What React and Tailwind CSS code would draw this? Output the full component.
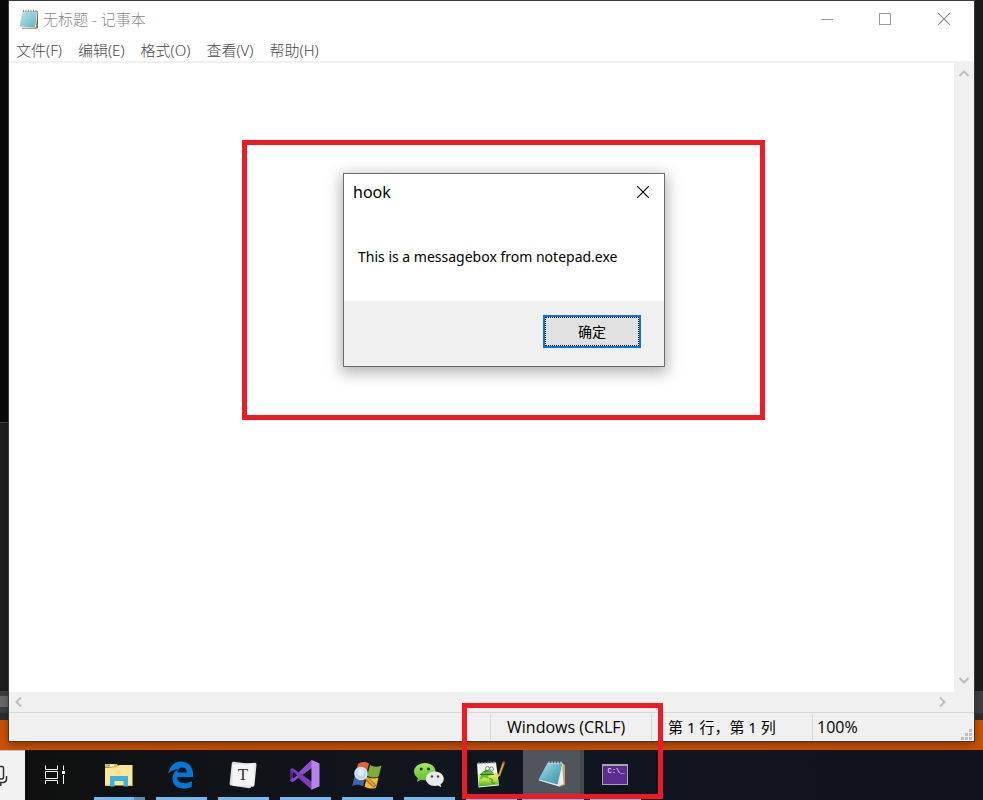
import React from "react";

const menus = ["文件(F)", "编辑(E)", "格式(O)", "查看(V)", "帮助(H)"];

function NotepadSmallIcon() {
  return (
    <svg width="20" height="21" viewBox="0 0 20 21" aria-hidden="true">
      <defs>
        <linearGradient id="padSmall" x1="0" y1="0" x2="1" y2="1">
          <stop offset="0" stopColor="#c9eaf0" />
          <stop offset="0.5" stopColor="#8fcfdc" />
          <stop offset="1" stopColor="#5eabc0" />
        </linearGradient>
      </defs>
      <path d="M4 2h15v17l-3 1z" fill="#7c6a4b" />
      <path d="M3 2h15.500l-1.500 17H2z" fill="#f4f1e6" />
      <path d="M3.500 2h14.500l-2 16.500L0.500 17.500z" fill="url(#padSmall)" />
      <path d="M4 5h13M3.700 8h13M3 11h13M2.500 14h13" stroke="#8cc6d4" strokeWidth="0.600" />
      <path d="M4.500 0.800v2.200M7 0.800v2.200M9.500 0.800v2.200M12 0.800v2.200M14.500 0.800v2.200M17 0.800v2.200" stroke="#8a8a8a" />
      <path d="M3 19.300h12l3-1" stroke="#a38f60" fill="none" />
    </svg>
  );
}

function Cross({ color }) {
  return (
    <svg width="12" height="12" viewBox="0 0 12 12" aria-hidden="true">
      <path d="M0 0l12 12M12 0L0 12" stroke={color} strokeWidth="1.100" />
    </svg>
  );
}

function Chevron({ d }) {
  return (
    <svg width="10" height="10" viewBox="0 0 10 10" aria-hidden="true">
      <path d={d} fill="none" stroke="#bdbdbd" strokeWidth="2" />
    </svg>
  );
}

function TitleBar() {
  return (
    <div className="flex h-9 items-center justify-between pl-2.5">
      <div className="flex items-center gap-1 text-[15px] font-light text-[#888888]">
        <NotepadSmallIcon />
        <h1>无标题 - 记事本</h1>
      </div>
      <div className="flex h-full">
        <button aria-label="最小化" className="flex w-[58px] items-center justify-center">
          <span className="h-px w-3 bg-[#999999]" />
        </button>
        <button aria-label="最大化" className="flex w-[58px] items-center justify-center">
          <span className="size-3 border border-[#999999]" />
        </button>
        <button aria-label="关闭" className="flex w-[60px] items-center justify-center">
          <Cross color="#888888" />
        </button>
      </div>
    </div>
  );
}

function StatusBar() {
  return (
    <div className="flex h-[29px] items-stretch border-t border-[#d7d7d7] bg-[#f0f0f0] text-[15px] text-black">
      <div className="flex-1" />
      <div className="my-px flex w-[161px] items-center border-l border-[#d7d7d7] pl-4 font-['Open_Sans',sans-serif] text-[16px]">Windows (CRLF)</div>
      <div className="my-px flex w-[161px] items-center border-l border-[#d7d7d7] pl-4">第 1 行，第 1 列</div>
      <div className="my-px flex w-[162px] items-center justify-between border-l border-[#d7d7d7] pl-1">
        <span className="font-['Open_Sans',sans-serif] text-[16px]">100%</span>
        <svg className="mr-0.5 self-end" width="11" height="11" viewBox="0 0 11 11" aria-hidden="true">
          <path d="M8 0h3v3H8zM4 4h3v3H4zM8 4h3v3H8zM0 8h3v3H0zM4 8h3v3H4zM8 8h3v3H8z" fill="#bfbfbf" />
        </svg>
      </div>
    </div>
  );
}

function NotepadWindow() {
  return (
    <section aria-label="记事本" className="relative mx-[9px] mt-px mb-[9px] flex flex-1 flex-col bg-white shadow-[0_0_0_1px_#3c3a36,0_3px_8px_rgba(0,0,0,0.4)]">
      <TitleBar />
      <nav className="flex h-6 items-center gap-4 pt-[3px] pl-[7px] text-[15px] font-light text-[#484848]">
        {menus.map((m) => (
          <button key={m}>{m}</button>
        ))}
      </nav>
      <div className="flex flex-1 border-t-2 border-[#f0f0f0]">
        <textarea aria-label="文本编辑器" className="flex-1 resize-none bg-white p-1 text-[15px] outline-none" />
        <div className="flex w-5 flex-col items-center justify-between bg-[#f0f0f0] pt-1.5 pb-[7px]">
          <button aria-label="向上滚动"><Chevron d="M0.500 7L5 2.500 9.500 7" /></button>
          <button aria-label="向下滚动"><Chevron d="M0.500 3L5 7.500 9.500 3" /></button>
        </div>
      </div>
      <div className="flex h-5 items-center justify-between bg-[#f0f0f0] pr-[27px] pl-[5px]">
        <button aria-label="向左滚动"><Chevron d="M7 0.500L2.500 5 7 9.500" /></button>
        <button aria-label="向右滚动"><Chevron d="M3 0.500L7.500 5 3 9.500" /></button>
      </div>
      <StatusBar />
    </section>
  );
}

function Backdrop() {
  return (
    <div className="absolute inset-0 flex flex-col bg-[#333333]">
      <div className="flex flex-1 justify-between">
        <div className="flex w-[9px] flex-col">
          <div className="h-[422px] bg-[#0a0a0a]" />
          <div className="h-px bg-[#3f3f46]" />
          <div className="flex-1 bg-[#1e1e1e]" />
          <div className="h-[5px] bg-[#3e3e42]" />
          <div className="h-[11px] bg-[#686868]" />
          <div className="h-[6px] bg-[#3e3e42]" />
          <div className="h-[7px] bg-[#2d2d30]" />
        </div>
        <div className="flex w-[9px] flex-col">
          <div className="flex-1 bg-[#1b1b1b]" />
          <div className="h-[22px] bg-[#3e3e42]" />
          <div className="h-[7px] bg-[#2d2d30]" />
        </div>
      </div>
      <div className="h-[30px] bg-[#ca5100]" />
    </div>
  );
}

function MessageBox() {
  return (
    <div role="dialog" aria-labelledby="box-title" className="absolute top-[173px] left-[343px] flex h-[194px] w-[322px] flex-col border border-[#6b6b6b] bg-white text-black shadow-[0_4px_14px_2px_rgba(0,0,0,0.3)]">
      <div className="flex h-9 items-center justify-between pr-[15px] pl-[9px]">
        <h2 id="box-title" className="text-[16px]">hook</h2>
        <button aria-label="关闭"><Cross color="#000000" /></button>
      </div>
      <p className="flex flex-1 items-center pt-0.5 pl-3.5 text-[14px]">This is a messagebox from notepad.exe</p>
      <div className="flex h-[65px] items-center justify-end bg-[#f0f0f0] pr-[23px] pb-1">
        <button className="h-[33px] w-[98px] border-2 border-[#0078d7] bg-[#e1e1e1] text-[14px]">
          <span className="flex h-full items-center justify-center border border-dotted border-black">确定</span>
        </button>
      </div>
    </div>
  );
}

function TaskViewIcon() {
  return (
    <svg width="20" height="20" viewBox="0 0 20 20" fill="none" stroke="#f2f2f2" aria-hidden="true">
      <path d="M0.500 0.500v4M12.500 0.500v4M0.500 4.500h12M0.500 19v-3.500h12V19M18.500 0.500V5M18.500 10v9" />
      <path d="M0.500 6.500h12v7H0.500z" />
      <path d="M17 6h3v3h-3z" fill="#fff" stroke="none" />
    </svg>
  );
}

function ExplorerIcon() {
  return (
    <svg width="28" height="24" viewBox="0 0 28 24" aria-hidden="true">
      <path d="M0 1h12l2 3H0z" fill="#f8b51c" />
      <path d="M3 1.500h6v2H3z" fill="#fff" />
      <path d="M3 1.500h2v2H3z" fill="#39b5e8" />
      <path d="M0 4.500l12-.5 2-2h13.500v20.500H0z" fill="#ffe596" />
      <path d="M5 23.500V13h18v10.500h-4.500V18h-9v5.500z" fill="#39b2e4" />
      <path d="M0 22.500h5M23 22.500h4.500" stroke="#f3c04a" />
    </svg>
  );
}

function EdgeIcon() {
  return (
    <svg width="26" height="28" viewBox="0 0 26 28" aria-hidden="true">
      <path fill="#0078d7" d="M0.500 12.400C1.600 5.200 6.600 0.600 13 0.600c7.500 0 12 5.400 12 12.200v3.300H9.100c.2 4 3.400 6.100 7.500 6.100 2.800 0 5.300-.8 7.300-2.100v5.300c-2.200 1.400-5.200 2.100-8.200 2.100-7 0-11.200-4-11.200-9.800 0-4.700 2.900-8.200 6.500-9.700C6.800 8.100 3 9.700.5 12.400zM9.300 11.400h9.500c0-3-1.700-4.900-4.500-4.900-2.700 0-4.600 2.100-5 4.900z" />
    </svg>
  );
}

function TyporaIcon() {
  return (
    <div className="relative flex h-7 w-7 items-center justify-center">
      <svg className="absolute inset-0" width="28" height="28" viewBox="0 0 28 28" aria-hidden="true">
        <path d="M5 0.800q-2-.3-2.200 1.500L0.600 22.500q-.2 1.800 1.500 2l18 2.700q1.600.2 1.900-1.500L25.500 5q.2-1.500-1.500-1.700z" fill="#dedede" />
        <path d="M4 3.500L25.500 1.800q2-.1 2 1.700L25.500 24q-.2 2-1.800 1.800L4 25z" fill="#e6e6e6" />
        <path d="M3.500 3.500h21.500v21H3.500z" fill="#f5f5f5" />
      </svg>
      <span className="relative font-['Liberation_Serif',serif] text-[17px] leading-none text-[#333333]">T</span>
    </div>
  );
}

function VisualStudioIcon() {
  return (
    <svg width="30" height="30" viewBox="0 0 30 30" aria-hidden="true">
      <path d="M0 9.500l2.500-1.200L6 10.500v9.500l-3.500 2L0 20.500z" fill="#52218a" />
      <path d="M2.500 8.300L22 26.500l-.2 3.200L2.500 13z" fill="#6f35ae" />
      <path d="M0 20.500L21.500 0l8 3.500-8 5L2.500 22z" fill="#8b50cc" />
      <path d="M0 9.500l2.500-1.200L22 21v8.500z" fill="#7a3eb9" />
      <path d="M3 11.500l4 3.700-4 3.800z" fill="#11151d" />
      <path d="M21.500 8.500v13L13 15z" fill="#11151d" />
      <path d="M21.500 0l8 3.500v22.800l-8 3.500z" fill="#b681f1" />
    </svg>
  );
}

function DebuggerIcon() {
  return (
    <svg width="30" height="28" viewBox="0 0 30 28" aria-hidden="true">
      <path d="M6 3c4-2.500 7-2.500 11-.5l-2.800 11.300C10.500 11.500 7 11.500 3 13.500z" fill="#e0622c" />
      <path d="M18 4c3.500 2 7 2.300 11.500.5l-2.800 11c-4 1.700-7.500 1.300-11.500-.8z" fill="#7fae35" />
      <path d="M2.800 14.500c4-2 7.500-1.700 11 .3l-2.600 10.500c-3.500-2-7-2.200-11-.3z" fill="#3f65ad" />
      <path d="M15 15.800c3.500 1.800 7 2 11.500.6L24 26.700c-4 1.500-7.500 1-11.500-.9z" fill="#f2c029" />
      <path d="M14.500 17.500l7.500 7" stroke="#b26a2d" strokeWidth="4" strokeLinecap="round" />
      <path d="M14.500 17l7 7" stroke="#e8a052" strokeWidth="2" strokeLinecap="round" />
      <circle cx="9" cy="12.500" r="6" fill="#b6d6f2" stroke="#dfe6ee" strokeWidth="1.600" />
      <circle cx="9" cy="11.500" r="3.500" fill="#ddeefb" />
    </svg>
  );
}

function WeChatIcon() {
  return (
    <svg width="30" height="26" viewBox="0 0 30 26" aria-hidden="true">
      <defs>
        <linearGradient id="chatGreen" x1="0" y1="0" x2="0" y2="1">
          <stop offset="0" stopColor="#a5e75c" />
          <stop offset="1" stopColor="#5fbd2c" />
        </linearGradient>
      </defs>
      <path d="M11 1c6 0 10.500 3.700 10.500 8.500S17 18.300 11 18.300c-1.500 0-2.700-.2-4-.6L3 20l.8-4C1.500 14.500 0 12.200 0 9.500 0 4.700 5 1 11 1z" fill="url(#chatGreen)" />
      <circle cx="7.200" cy="7" r="1.500" fill="#173b0e" />
      <circle cx="14.500" cy="7" r="1.500" fill="#173b0e" />
      <path d="M20.800 9.500c5 0 9 3.200 9 7.300 0 2.300-1.300 4.200-3.200 5.500l.6 3-3.200-1.700c-1 .3-2 .4-3.200.4-5 0-9-3.200-9-7.200s4-7.300 9-7.300z" fill="#e9ebeb" />
      <circle cx="18" cy="14.500" r="1.200" fill="#454949" />
      <circle cx="24" cy="14.500" r="1.200" fill="#454949" />
    </svg>
  );
}

function NotepadPlusIcon() {
  return (
    <svg width="30" height="29" viewBox="0 0 30 29" aria-hidden="true">
      <defs>
        <linearGradient id="meadow" x1="0" y1="0" x2="0" y2="1">
          <stop offset="0" stopColor="#f4f06a" />
          <stop offset="0.500" stopColor="#c5e43a" />
          <stop offset="1" stopColor="#3fae35" />
        </linearGradient>
      </defs>
      <path d="M1 3.500l19-1 3 23-20.500 2z" fill="#f4f4f0" />
      <path d="M2.300 14.500q8-3 19-1.500l1.400 11.500-19.500 2z" fill="url(#meadow)" />
      <path d="M4.500 14q3-4 7-4 4 0 6 3l-2 2-4 1 1.500 2-1.500.500-3.500-1.500-3 2.500-1-1 1-2.500z" fill="#58bd3e" />
      <path d="M4 14.500h14M8 12q2-2 4-1" fill="none" stroke="#2d6d28" />
      <circle cx="11.500" cy="8.500" r="2" fill="#eef2ea" stroke="#666" strokeWidth="0.800" />
      <circle cx="15.500" cy="9" r="2" fill="#eef2ea" stroke="#666" strokeWidth="0.800" />
      <path d="M13 19q4-1 3 2t3 2" fill="none" stroke="#3a7c31" />
      <path d="M3 2v2.500M6 2v2.500M9 2v2.500M12 1.500V4M15 1.500V4M18 1.500V4" stroke="#9a9a9a" />
      <path d="M28 2l-5 14" stroke="#a8742a" strokeWidth="2.400" />
      <path d="M27.500 3l-4.200 12" stroke="#f0b640" />
      <path d="M23.800 15.200l-1.600-.6-.3 3z" fill="#e6cfa4" />
      <path d="M27.300 1l2 .7-.7 2-2-.7z" fill="#9d4239" />
    </svg>
  );
}

function NotepadIcon() {
  return (
    <svg width="28" height="28" viewBox="0 0 28 28" aria-hidden="true">
      <defs>
        <linearGradient id="padLarge" x1="0" y1="0" x2="1" y2="1">
          <stop offset="0" stopColor="#b9e3ec" />
          <stop offset="0.500" stopColor="#67b4c7" />
          <stop offset="1" stopColor="#398fa8" />
        </linearGradient>
      </defs>
      <path d="M24 3l3 2v20l-6 2z" fill="#c6a75e" />
      <path d="M24 4l1.500 20L21 26z" fill="#f3f3ec" />
      <path d="M10 3.500h15L21 26.500 1 20.500z" fill="#e5f0ef" />
      <path d="M9.500 3h15L19.500 24.500.5 19.500z" fill="url(#padLarge)" />
      <path d="M11 1.500v2.500M14 1.500v2.500M17 1.500v2.500M20 1.500v2.500M23 1.500v2.500" stroke="#dedede" strokeWidth="1.200" />
    </svg>
  );
}

function ConsoleIcon() {
  return (
    <div className="flex h-[21px] w-[26px] flex-col border border-t-2 border-[#a5a5a5] bg-[#5c2d91]">
      <span className="pt-0.5 pl-0.5 font-['Liberation_Mono',monospace] text-[7px] leading-none text-white">C:\_</span>
    </div>
  );
}

const apps = [
  { name: "文件资源管理器", Icon: ExplorerIcon, stacked: true },
  { name: "Edge", Icon: EdgeIcon },
  { name: "Typora", Icon: TyporaIcon },
  { name: "Visual Studio", Icon: VisualStudioIcon },
  { name: "WinDbg", Icon: DebuggerIcon },
  { name: "微信", Icon: WeChatIcon },
  { name: "Notepad++", Icon: NotepadPlusIcon },
  { name: "记事本", Icon: NotepadIcon, active: true },
  { name: "命令提示符", Icon: ConsoleIcon },
];

function AppButton({ app }) {
  const { name, Icon, active, stacked } = app;
  return (
    <button aria-label={name} className="flex w-[62px] flex-col items-stretch">
      <span className={active ? "ml-px flex flex-1 items-center justify-center border-r-4 border-[#454850] bg-[#50545c]" : "flex flex-1 items-center justify-center pt-0.5"}>
        <Icon />
      </span>
      <span className={active ? "flex h-[3px] bg-[#76b9ed]" : "mr-[5px] ml-1.5 flex h-[3px] justify-end bg-[#76b9ed]"}>
        {stacked && <span className="w-[11px] bg-[#5b8ab2]" />}
      </span>
    </button>
  );
}

function Taskbar() {
  return (
    <footer className="relative flex h-[50px] bg-linear-to-r from-[#10100f] via-[#101620] to-[#0e131e]">
      <button aria-label="语音" className="flex w-[25px] items-center border-t border-[#c4c4c4] bg-[#f2f2f2]">
        <svg width="8" height="22" viewBox="0 0 8 22" fill="none" stroke="#333" strokeWidth="1.500" aria-hidden="true">
          <path d="M0 1.500h2q1.500 0 1.500 1.500v9q0 2-2 2H0M6.500 11v3q0 3-3 3.500H0M0.800 17v4" />
        </svg>
      </button>
      <button aria-label="任务视图" className="flex w-[63px] items-center justify-center pr-1">
        <TaskViewIcon />
      </button>
      {apps.map((app) => (
        <AppButton key={app.name} app={app} />
      ))}
      <div className="flex-1" />
    </footer>
  );
}

export default function App() {
  return (
    <div className="relative flex h-screen flex-col overflow-hidden font-['Noto_Sans','Noto_Sans_CJK_SC',sans-serif]">
      <main className="relative flex flex-1 flex-col">
        <Backdrop />
        <NotepadWindow />
      </main>
      <Taskbar />
      <div className="pointer-events-none absolute top-[140px] left-[242px] h-[280px] w-[523px] border-[5px] border-[#ed1c24]" />
      <MessageBox />
      <div className="pointer-events-none absolute bottom-px left-[462px] h-24 w-[201px] border-[5px] border-[#ed1c24]" />
    </div>
  );
}
